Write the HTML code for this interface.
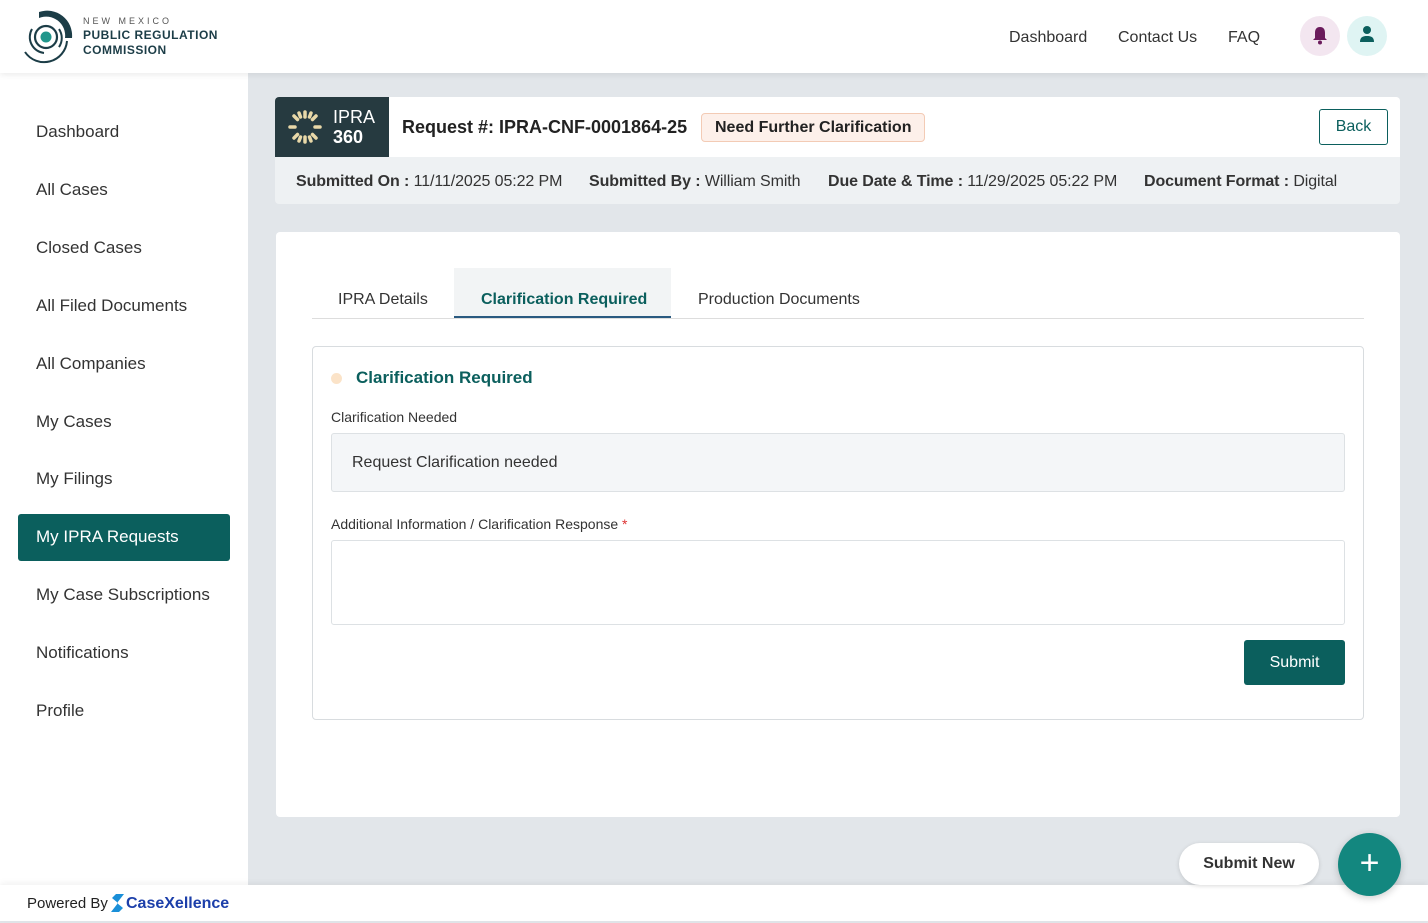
<!DOCTYPE html>
<html><head><meta charset="utf-8"><style>
*{box-sizing:border-box;margin:0;padding:0}
body{width:1428px;height:923px;overflow:hidden;font-family:"Liberation Sans",sans-serif;background:#e2e6ea;position:relative;color:#222}
.hdr{position:absolute;left:0;top:0;width:1428px;height:73px;background:#fff;box-shadow:0 2px 6px rgba(0,0,0,.08);z-index:2}
.side{position:absolute;left:0;top:73px;width:248px;height:812px;background:#fff}
.nav{position:absolute;left:36px;font-size:17px;color:#333}
.navact{position:absolute;left:18px;top:514px;width:212px;height:47px;background:#0b5f5d;border-radius:3px;color:#fff;font-size:17px;padding:13px 18px}
.foot{position:absolute;left:0;top:885px;width:1428px;height:36px;background:#fff;box-shadow:0 -2px 6px rgba(0,0,0,.06);z-index:3}
.card1{position:absolute;left:275px;top:97px;width:1125px;height:107px;background:#eef1f3;border-radius:4px;overflow:hidden}
.card1top{position:absolute;left:0;top:0;width:1125px;height:60px;background:#fff}
.lbl{font-weight:bold}
.card2{position:absolute;left:276px;top:232px;width:1124px;height:585px;background:#fff;border-radius:4px}
</style></head><body>
<div class="hdr">
 <svg style="position:absolute;left:22px;top:9px" width="54" height="56" viewBox="0 0 54 56">
  <path d="M17 3 A25 25 0 0 1 50 29 L43 29 A19 19 0 0 0 17 9 Z" fill="#1c3d47"/>
  <path d="M45 32 A23 23 0 0 1 3 43" stroke="#1c3d47" stroke-width="2" fill="none"/>
  <circle cx="24" cy="28" r="11" stroke="#1c3d47" stroke-width="2.2" fill="none"/>
  <path d="M37 20 A16 16 0 0 1 37 38" stroke="#1c3d47" stroke-width="2" fill="none"/>
  <path d="M10 20 A16 16 0 0 0 22 44" stroke="#1c3d47" stroke-width="2" fill="none"/>
  <circle cx="24" cy="28" r="5.5" fill="#20968b"/>
 </svg>
 <div style="position:absolute;left:83px;top:16px;font-size:9px;letter-spacing:3px;color:#555">NEW MEXICO</div>
 <div style="position:absolute;left:83px;top:28px;font-size:12px;font-weight:bold;color:#1c3d47;letter-spacing:.5px;line-height:15px">PUBLIC REGULATION<br>COMMISSION</div>
 <div style="position:absolute;left:1009px;top:29px;font-size:16px;color:#333">Dashboard</div>
 <div style="position:absolute;left:1118px;top:29px;font-size:16px;color:#333">Contact Us</div>
 <div style="position:absolute;left:1228px;top:29px;font-size:16px;color:#333">FAQ</div>
 <div style="position:absolute;left:1300px;top:16px;width:40px;height:40px;border-radius:50%;background:#f3e6f0"></div>
 <svg style="position:absolute;left:1311px;top:26px" width="18" height="19" viewBox="0 0 18 19"><path d="M9 1 C5 1 4 4 4 7 L4 12 L2 14 L16 14 L14 12 L14 7 C14 4 13 1 9 1Z" fill="#6b1b5c"/><circle cx="9" cy="16.5" r="2" fill="#6b1b5c"/></svg>
 <div style="position:absolute;left:1347px;top:16px;width:40px;height:40px;border-radius:50%;background:#dff4f3"></div>
 <svg style="position:absolute;left:1358px;top:25px" width="18" height="19" viewBox="0 0 18 19"><circle cx="9" cy="5" r="4" fill="#0b5f5d"/><path d="M2 17 C2 12 5 11 9 11 C13 11 16 12 16 17Z" fill="#0b5f5d"/></svg>
</div>
<div class="side">
 <div class="nav" style="top:49px">Dashboard</div>
 <div class="nav" style="top:107px">All Cases</div>
 <div class="nav" style="top:165px">Closed Cases</div>
 <div class="nav" style="top:223px">All Filed Documents</div>
 <div class="nav" style="top:281px">All Companies</div>
 <div class="nav" style="top:339px">My Cases</div>
 <div class="nav" style="top:396px">My Filings</div>
 <div class="nav" style="top:512px">My Case Subscriptions</div>
 <div class="nav" style="top:570px">Notifications</div>
 <div class="nav" style="top:628px">Profile</div>
</div>
<div class="navact">My IPRA Requests</div>
<div class="card1">
 <div class="card1top"></div>
 <div style="position:absolute;left:0;top:0;width:114px;height:60px;background:#263a40"></div>
 <svg style="position:absolute;left:12px;top:12px" width="36" height="36" viewBox="0 0 36 36">
  <g stroke="#e8d8a8" stroke-width="3.5" stroke-linecap="round">
   <line x1="18" y1="3" x2="18" y2="8"/><line x1="18" y1="28" x2="18" y2="33"/><line x1="3" y1="18" x2="8" y2="18"/><line x1="28" y1="18" x2="33" y2="18"/>
   <line x1="7" y1="7" x2="10.5" y2="10.5"/><line x1="25.5" y1="25.5" x2="29" y2="29"/><line x1="29" y1="7" x2="25.5" y2="10.5"/><line x1="7" y1="29" x2="10.5" y2="25.5"/>
   <line x1="12" y1="4" x2="13.5" y2="8"/><line x1="24" y1="4" x2="22.5" y2="8"/><line x1="12" y1="32" x2="13.5" y2="28"/><line x1="24" y1="32" x2="22.5" y2="28"/>
  </g>
 </svg>
 <div style="position:absolute;left:58px;top:10px;color:#fff;font-size:18px;line-height:20px">IPRA<br><b>360</b></div>
 <div style="position:absolute;left:127px;top:20px;font-size:18px;font-weight:bold;color:#222">Request #: IPRA-CNF-0001864-25</div>
 <div style="position:absolute;left:426px;top:16px;height:29px;padding:5px 13px;background:#fdf0ea;border:1px solid #f3cbb5;border-radius:4px;font-size:16px;font-weight:bold;color:#222">Need Further Clarification</div>
 <div style="position:absolute;left:1044px;top:12px;width:69px;height:36px;border:1px solid #0b5f5d;border-radius:3px;color:#0b5f5d;font-size:16px;text-align:center;line-height:34px">Back</div>
 <div style="position:absolute;left:21px;top:76px;font-size:16px;color:#333;white-space:nowrap;letter-spacing:-.1px"><span class="lbl">Submitted On :</span> 11/11/2025 05:22 PM</div>
 <div style="position:absolute;left:314px;top:76px;font-size:16px;color:#333;white-space:nowrap;letter-spacing:-.1px"><span class="lbl">Submitted By :</span> William Smith</div>
 <div style="position:absolute;left:553px;top:76px;font-size:16px;color:#333;white-space:nowrap;letter-spacing:-.1px"><span class="lbl">Due Date &amp; Time :</span> 11/29/2025 05:22 PM</div>
 <div style="position:absolute;left:869px;top:76px;font-size:16px;color:#333;white-space:nowrap;letter-spacing:-.1px"><span class="lbl">Document Format :</span> Digital</div>
</div>
<div class="card2">
 <div style="position:absolute;left:36px;top:86px;width:1052px;height:1px;background:#ddd"></div>
 <div style="position:absolute;left:178px;top:36px;width:217px;height:50px;background:#f2f4f5;border-bottom:2px solid #2a5a80"></div>
 <div style="position:absolute;left:62px;top:59px;font-size:16px;color:#333">IPRA Details</div>
 <div style="position:absolute;left:205px;top:59px;font-size:16px;color:#0b5f5d;font-weight:bold">Clarification Required</div>
 <div style="position:absolute;left:422px;top:59px;font-size:16px;color:#333">Production Documents</div>
 <div style="position:absolute;left:36px;top:114px;width:1052px;height:374px;border:1px solid #d8dcdf;border-radius:4px">
  <div style="position:absolute;left:18px;top:26px;width:11px;height:11px;border-radius:50%;background:#fbe3c8"></div>
  <div style="position:absolute;left:43px;top:21px;font-size:17px;font-weight:bold;color:#0b5f5d">Clarification Required</div>
  <div style="position:absolute;left:18px;top:62px;font-size:14px;color:#333">Clarification Needed</div>
  <div style="position:absolute;left:18px;top:86px;width:1014px;height:59px;background:#f4f6f8;border:1px solid #dde1e4;border-radius:3px;padding:20px;font-size:16px;color:#333">Request Clarification needed</div>
  <div style="position:absolute;left:18px;top:169px;font-size:14px;color:#333">Additional Information / Clarification Response <span style="color:#d33">*</span></div>
  <div style="position:absolute;left:18px;top:193px;width:1014px;height:85px;background:#fff;border:1px solid #dde1e4;border-radius:3px"></div>
  <div style="position:absolute;left:931px;top:293px;width:101px;height:45px;background:#0b5f5d;border-radius:3px;color:#fff;font-size:16px;text-align:center;line-height:45px">Submit</div>
 </div>
</div>
<div class="foot">
 <div style="position:absolute;left:27px;top:10px;font-size:15px;color:#222">Powered By</div>
 <svg style="position:absolute;left:110px;top:8px" width="15" height="20" viewBox="0 0 15 20"><path d="M14 1 L6 1 L2 5 L8 10 L1 19 L9 19 L13 15 L7 10 Z" fill="#1a8fd8"/></svg>
 <div style="position:absolute;left:126px;top:10px;font-size:16px;color:#1c3faa;font-weight:bold">CaseXellence</div>
</div>
<div style="position:absolute;left:1179px;top:843px;width:140px;height:42px;background:#fff;border-radius:21px;box-shadow:0 1px 4px rgba(0,0,0,.15);font-size:16px;font-weight:bold;color:#333;text-align:center;line-height:42px;z-index:4">Submit New</div>
<div style="position:absolute;left:1338px;top:833px;width:63px;height:63px;border-radius:50%;background:#13877f;color:#fff;font-size:34px;text-align:center;line-height:60px;z-index:4;box-shadow:0 2px 8px rgba(0,0,0,.2)">+</div>
</body></html>
